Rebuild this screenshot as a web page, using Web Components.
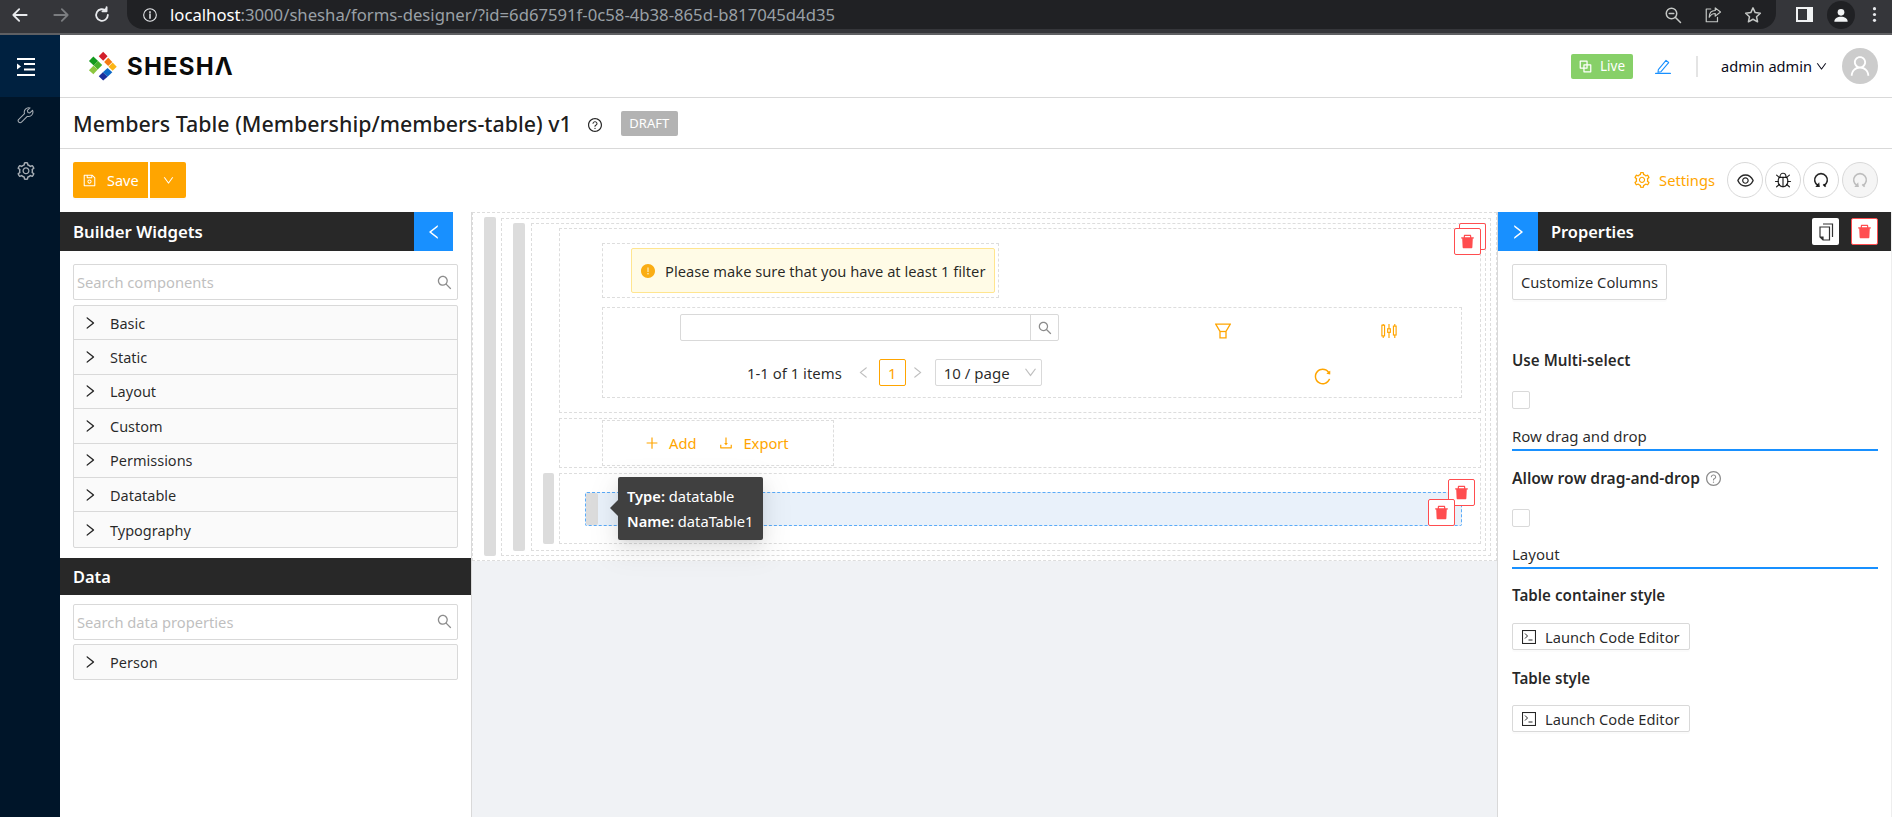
<!doctype html>
<html>
<head>
<meta charset="utf-8">
<title>Members Table</title>
<style>
  html, body { margin: 0; height: 100%; overflow: hidden; background: #fff; }
  body { font: 14.7px "Noto Sans", "Open Sans", sans-serif; color: rgba(0, 0, 0, 0.85); }
</style>
</head>
<body>
<shesha-app></shesha-app>

<script>
const ant = (d) => `<svg viewBox="64 64 896 896" fill="currentColor"><path d="${d}"/></svg>`;
const line = (body, box = 24, width = 1.6) =>
  `<svg viewBox="0 0 ${box} ${box}" fill="none" stroke="currentColor" stroke-width="${width}" stroke-linecap="round" stroke-linejoin="round">${body}</svg>`;

const icons = {
  search: ant("M909.6 854.5L649.9 594.8C690.2 542.7 712 479 712 412c0-80.2-31.3-155.4-87.9-212.1-56.6-56.7-132-87.9-212.1-87.9s-155.5 31.3-212.1 87.9C143.2 256.5 112 331.8 112 412c0 80.1 31.3 155.5 87.9 212.1C256.5 680.8 331.8 712 412 712c67 0 130.6-21.8 182.7-62l259.7 259.6a8.2 8.2 0 0011.6 0l43.6-43.5a8.2 8.2 0 000-11.6zM570.4 570.4C528 612.7 471.8 636 412 636s-116-23.3-158.4-65.6C211.3 528 188 471.8 188 412s23.3-116.1 65.6-158.4C296 211.3 352.2 188 412 188s116.1 23.2 158.4 65.6S636 352.2 636 412s-23.3 116.1-65.6 158.4z"),
  trash: ant("M864 256H736v-80c0-35.3-28.7-64-64-64H352c-35.3 0-64 28.7-64 64v80H160c-17.7 0-32 14.3-32 32v32c0 4.4 3.6 8 8 8h60.4l24.7 523c1.6 34.1 29.8 61 63.9 61h454c34.2 0 62.3-26.8 63.9-61l24.7-523H888c4.4 0 8-3.6 8-8v-32c0-17.7-14.3-32-32-32zm-200 0H360v-72h304v72z"),
  right: ant("M765.7 486.8L314.9 134.7A7.97 7.97 0 00302 141v77.3c0 4.9 2.3 9.6 6.1 12.6l360 281.1-360 281.1c-3.9 3-6.1 7.7-6.1 12.6V883c0 6.7 7.7 10.4 12.9 6.3l450.8-352.1a31.96 31.96 0 000-50.4z"),
  left: ant("M724 218.3V141c0-6.7-7.7-10.4-12.9-6.3L260.3 486.8a31.86 31.86 0 000 50.3l450.8 352.1c5.3 4.1 12.9.4 12.9-6.3v-77.3c0-4.9-2.3-9.6-6.1-12.6l-360-281 360-281.1c3.8-3 6.1-7.7 6.1-12.6z"),
  down: ant("M884 256h-75c-5.1 0-9.9 2.5-12.9 6.6L512 654.2 227.9 262.6c-3-4.1-7.8-6.6-12.9-6.6h-75c-6.5 0-10.3 7.4-6.5 12.7l352.6 486.1c12.8 17.6 39 17.6 51.7 0l352.6-486.1c3.9-5.3.1-12.7-6.4-12.7z"),
  plus: `<svg viewBox="64 64 896 896" fill="currentColor"><path d="M482 152h60q8 0 8 8v704q0 8-8 8h-60q-8 0-8-8V160q0-8 8-8z"/><path d="M176 474h672q8 0 8 8v60q0 8-8 8H176q-8 0-8-8v-60q0-8 8-8z"/></svg>`,
  save: ant("M893.3 293.3L730.7 130.7c-7.5-7.5-16.7-13-26.7-16V112H144c-17.7 0-32 14.3-32 32v736c0 17.7 14.3 32 32 32h736c17.7 0 32-14.3 32-32V338.5c0-17-6.7-33.2-18.7-45.2zM384 184h256v104H384V184zm456 656H184V184h136v136c0 17.7 14.3 32 32 32h320c17.7 0 32-14.3 32-32V205.8l136 136V840zM512 442c-79.5 0-144 64.5-144 144s64.5 144 144 144 144-64.5 144-144-64.5-144-144-144zm0 224c-44.2 0-80-35.8-80-80s35.8-80 80-80 80 35.8 80 80-35.8 80-80 80z"),
  gear: ant("M924.8 625.7l-65.5-56c3.1-19 4.7-38.4 4.7-57.8s-1.6-38.8-4.7-57.8l65.5-56a32.03 32.03 0 009.3-35.2l-.9-2.6a443.74 443.74 0 00-79.7-137.9l-1.8-2.1a32.12 32.12 0 00-35.1-9.5l-81.3 28.9c-30-24.6-63.5-44-99.7-57.6l-15.7-85a32.05 32.05 0 00-25.8-25.7l-2.7-.5c-52.1-9.4-106.9-9.4-159 0l-2.7.5a32.05 32.05 0 00-25.8 25.7l-15.8 85.4a351.86 351.86 0 00-99 57.4l-81.9-29.1a32 32 0 00-35.1 9.5l-1.8 2.1a446.02 446.02 0 00-79.7 137.9l-.9 2.6c-4.5 12.5-.8 26.5 9.3 35.2l66.3 56.6c-3.1 18.8-4.6 38-4.6 57.1 0 19.2 1.5 38.4 4.6 57.1L99 625.5a32.03 32.03 0 00-9.3 35.2l.9 2.6c18.1 50.4 44.9 96.9 79.7 137.9l1.8 2.1a32.12 32.12 0 0035.1 9.5l81.9-29.1c29.8 24.5 63.1 43.9 99 57.4l15.8 85.4a32.05 32.05 0 0025.8 25.7l2.7.5a449.4 449.4 0 00159 0l2.7-.5a32.05 32.05 0 0025.8-25.7l15.7-85a350 350 0 0099.7-57.6l81.3 28.9a32 32 0 0035.1-9.5l1.8-2.1c34.8-41.1 61.6-87.5 79.7-137.9l.9-2.6c4.5-12.3.8-26.3-9.3-35zM788.3 465.9c2.5 15.1 3.8 30.6 3.8 46.1s-1.3 31-3.8 46.1l-6.6 40.1 74.7 63.9a370.03 370.03 0 01-42.6 73.6L721 702.8l-31.4 25.8c-23.9 19.6-50.5 35-79.3 45.8l-38.1 14.3-17.9 97a377.5 377.5 0 01-85 0l-17.9-97.2-37.8-14.5c-28.5-10.8-55-26.2-78.7-45.7l-31.4-25.9-93.4 33.2c-17-22.9-31.2-47.6-42.6-73.6l75.5-64.5-6.5-40c-2.4-14.9-3.7-30.3-3.7-45.5 0-15.3 1.2-30.6 3.7-45.5l6.5-40-75.5-64.5c11.3-26.1 25.6-50.7 42.6-73.6l93.4 33.2 31.4-25.9c23.7-19.5 50.2-34.9 78.7-45.7l37.9-14.3 17.9-97.2c28.1-3.2 56.8-3.2 85 0l17.9 97 38.1 14.3c28.7 10.8 55.4 26.2 79.3 45.8l31.4 25.8 92.8-32.9c17 22.9 31.2 47.6 42.6 73.6L781.8 426l6.5 39.9zM512 326c-97.2 0-176 78.8-176 176s78.8 176 176 176 176-78.8 176-176-78.8-176-176-176zm79.2 255.2A111.6 111.6 0 01512 614c-29.9 0-58-11.7-79.2-32.8A111.6 111.6 0 01400 502c0-29.9 11.7-58 32.8-79.2C454 401.6 482.1 390 512 390c29.9 0 58 11.6 79.2 32.8A111.6 111.6 0 01624 502c0 29.9-11.7 58-32.8 79.2z"),
  eye: ant("M942.2 486.2C847.4 286.5 704.1 186 512 186c-192.2 0-335.4 100.5-430.2 300.3a60.3 60.3 0 000 51.5C176.6 737.5 319.9 838 512 838c192.2 0 335.4-100.5 430.2-300.3 7.7-16.2 7.7-35 0-51.5zM512 766c-161.3 0-279.4-81.8-362.7-254C232.6 339.8 350.7 258 512 258c161.3 0 279.4 81.8 362.7 254C791.5 684.2 673.4 766 512 766zm-4-430c-97.2 0-176 78.8-176 176s78.8 176 176 176 176-78.8 176-176-78.8-176-176-176zm0 288c-61.9 0-112-50.1-112-112s50.1-112 112-112 112 50.1 112 112-50.1 112-112 112z"),
  reload: ant("M909.1 209.3l-56.4 44.1C775.8 155.1 656.2 92 521.9 92 290 92 102.3 279.5 102 511.5 101.7 743.7 289.8 932 521.9 932c181.3 0 335.8-115 394.6-276.1 1.5-4.2-.7-8.9-4.9-10.3l-56.7-19.5a8 8 0 00-10.1 4.8c-1.8 5-3.8 10-5.9 14.9-17.3 41-42.1 77.8-73.7 109.4A344.77 344.77 0 01655.9 829c-42.3 17.9-87.4 27-133.8 27-46.5 0-91.5-9.1-133.8-27A341.5 341.5 0 01279 755.2a342.16 342.16 0 01-73.7-109.4c-17.9-42.4-27-87.4-27-133.9s9.1-91.5 27-133.9c17.3-41 42.1-77.8 73.7-109.4 31.6-31.6 68.4-56.4 109.3-73.8 42.3-17.9 87.4-27 133.8-27 46.5 0 91.5 9.1 133.8 27a341.5 341.5 0 01109.3 73.8c9.9 9.9 19.2 20.4 27.8 31.4l-60.2 47a8 8 0 003 14.1l175.6 43c5 1.2 9.9-2.6 9.9-7.7l.8-180.9c-.1-6.6-7.8-10.3-13-6.2z"),
  download: ant("M505.7 661a8 8 0 0012.6 0l112-141.7c4.1-5.2.4-12.9-6.3-12.9h-74.1V168c0-4.4-3.6-8-8-8h-60c-4.4 0-8 3.6-8 8v338.3H400c-6.7 0-10.4 7.7-6.3 12.9l112 141.8zM878 626h-60c-4.4 0-8 3.6-8 8v154H214V634c0-4.4-3.6-8-8-8h-60c-4.4 0-8 3.6-8 8v198c0 17.7 14.3 32 32 32h684c17.7 0 32-14.3 32-32V634c0-4.4-3.6-8-8-8z"),
  help: `<svg viewBox="64 64 896 896" fill="currentColor"><path d="M512 64C264.6 64 64 264.6 64 512s200.6 448 448 448 448-200.6 448-448S759.4 64 512 64zm0 820c-205.4 0-372-166.6-372-372s166.6-372 372-372 372 166.6 372 372-166.6 372-372 372z"/><path d="M623.6 316.7C593.6 290.4 554 276 512 276s-81.6 14.5-111.6 40.7C369.2 344 352 380.7 352 420v7.6c0 4.4 3.6 8 8 8h48c4.4 0 8-3.6 8-8V420c0-44.1 43.1-80 96-80s96 35.9 96 80c0 31.1-22 59.6-56.1 72.7-21.2 8.1-39.2 22.3-52.1 40.9-13.1 19-19.9 41.8-19.9 64.9V620c0 4.4 3.6 8 8 8h48c4.4 0 8-3.6 8-8v-22.7a48.3 48.3 0 0130.9-44.8c59-22.7 97.1-74.7 97.1-132.5.1-39.3-17.1-76-48.3-103.3zM472 732a40 40 0 1080 0 40 40 0 10-80 0z"/></svg>`,
  warn: ant("M512 64C264.6 64 64 264.6 64 512s200.6 448 448 448 448-200.6 448-448S759.4 64 512 64zm-32 232c0-4.4 3.6-8 8-8h48c4.4 0 8 3.6 8 8v272c0 4.4-3.6 8-8 8h-48c-4.4 0-8-3.6-8-8V296zm32 440a48.01 48.01 0 010-96 48.01 48.01 0 010 96z"),
  user: ant("M858.5 763.6a374 374 0 00-80.6-119.5 375.63 375.63 0 00-119.5-80.6c-.4-.2-.8-.3-1.2-.5C719.5 518 760 444.7 760 362c0-137-111-248-248-248S264 225 264 362c0 82.7 40.5 156 102.8 201.1-.4.2-.8.3-1.2.5-44.8 18.9-85 46-119.5 80.6a375.63 375.63 0 00-80.6 119.5A371.7 371.7 0 00136 901.8a8 8 0 008 8.2h60c4.4 0 8-3.6 8-7.8 2-77.2 33-149.5 87.8-204.3 56.7-56.7 132-87.9 212.2-87.9s155.5 31.2 212.2 87.9C779 752.7 810 825 812 902.2c.1 4.4 3.6 7.8 8 7.8h60a8 8 0 008-8.2c-1-47.8-10.9-94.3-29.5-138.2zM512 534c-45.9 0-89.1-17.9-121.6-50.4S340 407.9 340 362c0-45.9 17.9-89.1 50.4-121.6S466.1 190 512 190s89.1 17.9 121.6 50.4S684 316.1 684 362c0 45.9-17.9 89.1-50.4 121.6S557.9 534 512 534z"),
  edit: line(`<path d="M5 17.5 16.500 3.500l4 3.300L9 20.500l-4.500 1z"/><path d="M1 23.200h22" stroke-width="2"/>`),
  menu: `<svg viewBox="0 0 18 18" fill="currentColor"><rect x="0" y="0" width="18" height="2"/><rect x="7" y="5" width="11" height="2"/><rect x="7" y="10.500" width="11" height="2"/><rect x="0" y="16" width="18" height="2"/><path d="M0 5.500v6l4-3z"/></svg>`,
  wrench: line(`<path d="M21 4.500l-3.600 3.600-2.600-.8-.8-2.600L17.600 1.200a6 6 0 0 0-7.400 7.800L2.400 16.800a2.600 2.600 0 0 0 3.700 3.700l7.800-7.800A6 6 0 0 0 21 4.500z"/>`, 23, 1.400),
  live: line(`<rect x="2" y="2" width="11" height="11"/><rect x="8" y="8" width="11" height="11"/>`, 21, 2),
  bug: line(`<path d="M8 8c0-3 1.800-5 4-5s4 2 4 5"/><path d="M7 8.500h10c1 1.500 1.500 3.500 1.500 5.500 0 4-3 7-6.500 7s-6.500-3-6.500-7c0-2 .5-4 1.500-5.500z"/><path d="M12 8.500v12.500M2 14h3.500M18.500 14H22M3.500 5.500l3.500 3M20.500 5.500 17 8.500M3.500 21l3.500-3M20.500 21 17 18"/>`),
  undo: `<svg viewBox="0 0 24 24" fill="none" stroke="currentColor" stroke-width="2.400"><path d="M7.500 20.300a9.500 9.500 0 1 1 9 0"/><path d="M3.500 22.500h6.800l-1-7z" fill="currentColor" stroke="none"/><path d="M15.500 18.500l3.500 3.500" stroke-width="2.600"/></svg>`,
  funnel: `<svg viewBox="0 0 16 16" fill="none" stroke="currentColor" stroke-width="1.300"><path d="M.7 1.200h14.600L11 8.500v6.300H5V8.500z"/><path d="M5 8.500h6"/></svg>`,
  columns: `<svg viewBox="0 0 18 18" fill="none" stroke="currentColor" stroke-width="1.300"><rect x="1" y="2.500" width="3" height="12"/><path d="M2.500 1v1.500M2.500 14.500V17"/><rect x="7.500" y="6.500" width="3" height="4"/><path d="M9 1v5.500M9 10.500V17"/><rect x="14" y="3.500" width="3" height="10"/><path d="M15.500 1v2.500M15.500 13.500V17"/></svg>`,
  code: `<svg viewBox="0 0 14 14" fill="none" stroke="currentColor"><rect x="0.500" y="0.500" width="13" height="13" stroke-width="1.100"/><path d="M3 3.500l2.500 2.500L3 8.500M6.500 10h4" stroke-width="1"/></svg>`,
  copy: `<svg viewBox="0 0 18 18" fill="none" stroke="currentColor" stroke-width="1.200"><path d="M6 1h9.500v13"/><path d="M3 4h9.500v13H6l-3-3z" fill="#fff"/><path d="M3 14h3v3" fill="currentColor"/></svg>`,
  back: line(`<path d="M20 12H4M11 5l-7 7 7 7"/>`, 24, 2.200),
  chromeReload: line(`<path d="M19 12a7 7 0 1 1-2.200-5.100"/><path d="M17.500 2.500v5h-5" fill="currentColor"/>`, 24, 2.200),
  info: line(`<circle cx="12" cy="12" r="9.500"/><path d="M12 11v6M12 7v1.500" stroke-width="2.200"/>`),
  zoomOut: line(`<circle cx="10" cy="10" r="7"/><path d="M15 15l7 7M7 10h6"/>`, 24, 2),
  share: line(`<path d="M9 4H3v17h15v-6"/><path d="M22 8l-7-5.500v3.500C10 6 7 9.500 7 15c2-3.500 4.500-5 8-5v3.500z"/>`, 24, 1.600),
  star: line(`<path d="M12 2.500l2.900 6.300 6.900.8-5.100 4.700 1.400 6.800L12 17.700 5.900 21.100l1.400-6.800L2.200 9.600l6.900-.8z"/>`, 24, 2),
  account: `<svg viewBox="0 0 24 24" fill="currentColor"><circle cx="12" cy="8" r="5"/><path d="M2 22c0-5 4.500-7.500 10-7.500S22 17 22 22z"/></svg>`,
  dots: `<svg viewBox="0 0 4 18" fill="currentColor"><circle cx="2" cy="2" r="1.900"/><circle cx="2" cy="9" r="1.900"/><circle cx="2" cy="16" r="1.900"/></svg>`
};

class UiIcon extends HTMLElement {
  connectedCallback() {
    const root = this.attachShadow({ mode: "open" });
    const size = this.getAttribute("size") ?? "14";
    root.innerHTML = `<style>
      :host { display: inline-flex; flex: none; width: ${size}px; height: ${size}px; line-height: 0; }
      svg { width: 100%; height: 100%; display: block; }
    </style>${icons[this.getAttribute("name")] ?? ""}`;
  }
}

class ChromeBar extends HTMLElement {
  connectedCallback() {
    const root = this.attachShadow({ mode: "open" });
    root.innerHTML = `<style>
      :host { display: flex; align-items: flex-start; height: 35px; box-sizing: border-box; background: #35363a; border-bottom: 2px solid #5f6063; color: #e8eaed; }
      .nav { display: flex; width: 127px; height: 29px; align-items: center; padding-left: 10px; box-sizing: border-box; gap: 21px; }
      .nav ui-icon:nth-child(2) { color: #7b7d80; }
      .omni { flex: none; width: 1649px; height: 29px; background: #202124; border-radius: 0 0 16px 16px; display: flex; align-items: center; padding: 0 0 0 15px; box-sizing: border-box; }
      .url { margin-left: 12px; flex: 1; font: 16.7px "Noto Sans", sans-serif; color: #9aa0a6; white-space: nowrap; }
      .url b { font-weight: 400; color: #fff; }
      .omni .end { display: flex; gap: 22px; margin-right: 14px; color: #c4c7c5; }
      .tail { display: flex; align-items: center; height: 29px; flex: 1; position: relative; }
      .panel { margin-left: 20px; width: 17px; height: 15px; border: 2px solid #f1f3f4; background: linear-gradient(90deg, #35363a 0 9px, #f1f3f4 9px); box-sizing: border-box; }
      .acct { margin-left: 14px; width: 28px; height: 28px; border-radius: 50%; background: #202124; display: flex; align-items: center; justify-content: center; color: #f1f3f4; }
      .dots { margin-left: 12px; color: #e8eaed; }
    </style>
    <div class="nav">
      <ui-icon name="back" size="20"></ui-icon>
      <ui-icon name="back" size="20" style="transform: scaleX(-1)"></ui-icon>
      <ui-icon name="chromeReload" size="20"></ui-icon>
    </div>
    <div class="omni">
      <ui-icon name="info" size="16"></ui-icon>
      <div class="url"><b>localhost</b>:3000/shesha/forms-designer/?id=6d67591f-0c58-4b38-865d-b817045d4d35</div>
      <div class="end">
        <ui-icon name="zoomOut" size="18"></ui-icon>
        <ui-icon name="share" size="18"></ui-icon>
        <ui-icon name="star" size="18"></ui-icon>
      </div>
    </div>
    <div class="tail">
      <div class="panel"></div>
      <div class="acct"><ui-icon name="account" size="16"></ui-icon></div>
      <ui-icon class="dots" name="dots" size="15"></ui-icon>
    </div>`;
  }
}

class AppSider extends HTMLElement {
  connectedCallback() {
    const root = this.attachShadow({ mode: "open" });
    root.innerHTML = `<style>
      :host { display: flex; flex-direction: column; width: 60px; flex: none; background: #001529; color: rgba(255, 255, 255, 0.65); }
      .top { height: 62px; background: #002140; display: flex; justify-content: center; align-items: center; color: #fff; padding: 2px 9px 0 0; box-sizing: border-box; }
      .item { display: flex; justify-content: center; align-items: center; box-sizing: border-box; padding-right: 9px; }
      .item.first { height: 35px; padding-top: 1px; }
      .item.next { height: 60px; padding-top: 18px; }
    </style>
    <div class="top"><ui-icon name="menu" size="18"></ui-icon></div>
    <div class="item first"><ui-icon name="wrench" size="17"></ui-icon></div>
    <div class="item next"><ui-icon name="gear" size="18"></ui-icon></div>`;
  }
}

class AppHeader extends HTMLElement {
  connectedCallback() {
    const root = this.attachShadow({ mode: "open" });
    root.innerHTML = `<style>
      :host { display: flex; align-items: center; height: 63px; box-sizing: border-box; border-bottom: 1.500px solid #d9d9d9; padding: 0 14px 0 28px; background: #fff; }
      .logo { display: flex; align-items: center; gap: 9px; }
      .logo svg { width: 30px; height: 31px; display: block; }
      .word { font: 700 24px Inter, "Liberation Sans", sans-serif; letter-spacing: 1.2px; color: #0b0b0b; }
      .spacer { flex: 1; }
      .live { width: 62px; height: 25px; border-radius: 2px; background: #87d068; color: #fff; display: flex; align-items: center; justify-content: center; gap: 8px; font-size: 13.5px; }
      .edit { margin-left: 22px; color: #1890ff; }
      .sep { width: 2px; height: 21px; background: #e4e4e4; margin: 0 23px 0 25px; }
      .who { display: flex; align-items: center; gap: 4px; font-size: 14.6px; color: #0b0b1a; }
      .avatar { margin-left: 15px; width: 36px; height: 36px; border-radius: 50%; background: #ccc; color: #fff; display: flex; align-items: center; justify-content: center; }
    </style>
    <div class="logo">
      <svg viewBox="80 55 95 97">
        <polygon fill="#d3202b" points="128,57 142,71 128,85 114,71"/>
        <polygon fill="#f47a12" points="144,76 157,89 144,102 131,89"/>
        <polygon fill="#fbb415" points="158,91 171,104 158,117 145,104"/>
        <polygon fill="#0e69c7" points="142,108 157,122 142,136 127,122"/>
        <polygon fill="#1b2f9c" points="127,122 142,136 128,148 114,134"/>
        <polygon fill="#129a1d" points="83,86 97,72 112,86 98,100"/>
        <polygon fill="#45b02a" points="98,100 112,86 125,99 111,113"/>
        <polygon fill="#8cc63f" points="111,113 97,128 83,115 97,101"/>
      </svg>
      <span class="word">SHESHΛ</span>
    </div>
    <div class="spacer"></div>
    <div class="live"><ui-icon name="live" size="13"></ui-icon><span>Live</span></div>
    <ui-icon class="edit" name="edit" size="16"></ui-icon>
    <div class="sep"></div>
    <div class="who"><span>admin admin</span><ui-icon name="down" size="11"></ui-icon></div>
    <div class="avatar"><ui-icon name="user" size="22"></ui-icon></div>`;
  }
}

class TitleBar extends HTMLElement {
  connectedCallback() {
    const root = this.attachShadow({ mode: "open" });
    root.innerHTML = `<style>
      :host { display: flex; align-items: center; height: 51px; box-sizing: border-box; border-bottom: 1.500px solid #d9d9d9; padding: 0 0 0 13px; }
      h1 { margin: 0; font-size: 21.4px; font-weight: 500; color: rgba(0, 0, 0, 0.9); white-space: nowrap; }
      ui-icon { margin: 4px 19px 0 16px; }
      .tag { width: 57px; height: 25px; border-radius: 2px; background: #b3b3b3; color: #fff; font-size: 13px; display: flex; align-items: center; justify-content: center; }
    </style>
    <h1>Members Table (Membership/members-table) v1</h1>
    <ui-icon name="help" size="14"></ui-icon>
    <div class="tag">DRAFT</div>`;
  }
}

class DesignerToolbar extends HTMLElement {
  connectedCallback() {
    const root = this.attachShadow({ mode: "open" });
    root.innerHTML = `<style>
      :host { display: flex; align-items: flex-start; height: 63px; box-sizing: border-box; padding: 13px 14px 0 13px; }
      .save, .drop { height: 36px; background: #ffa500; color: #fff; display: flex; align-items: center; box-shadow: 0 2px 0 rgba(0, 0, 0, 0.02); }
      .save { width: 75px; box-sizing: border-box; padding-left: 10px; gap: 11px; font-size: 14.5px; border-radius: 2px 0 0 2px; }
      .drop { width: 36px; justify-content: center; margin-left: 2px; border-radius: 0 2px 2px 0; }
      .spacer { flex: 1; }
      .settings { display: flex; align-items: center; gap: 9px; height: 36px; color: #ffa500; margin-right: 10px; }
      .round { width: 36px; height: 36px; box-sizing: border-box; border: 1px solid #d9d9d9; border-radius: 50%; display: flex; align-items: center; justify-content: center; margin-left: 2px; background: #fff; }
      .round.off { background: #f5f5f5; color: #bdbdbd; margin-left: 3px; }
    </style>
    <div class="save"><ui-icon name="save" size="13"></ui-icon><span>Save</span></div>
    <div class="drop"><ui-icon name="down" size="11"></ui-icon></div>
    <div class="spacer"></div>
    <div class="settings"><ui-icon name="gear" size="16"></ui-icon><span>Settings</span></div>
    <div class="round"><ui-icon name="eye" size="17"></ui-icon></div>
    <div class="round"><ui-icon name="bug" size="18"></ui-icon></div>
    <div class="round"><ui-icon name="undo" size="16"></ui-icon></div>
    <div class="round off"><ui-icon name="undo" size="16"></ui-icon></div>`;
  }
}

class SearchBox extends HTMLElement {
  connectedCallback() {
    const root = this.attachShadow({ mode: "open" });
    root.innerHTML = `<style>
      :host { display: flex; align-items: center; justify-content: space-between; height: 36px; box-sizing: border-box; border: 1px solid #d9d9d9; border-radius: 2px; padding: 0 5px 0 3px; background: #fff; color: #bfbfbf; }
      ui-icon { color: #8c8c8c; }
    </style>
    <span>${this.getAttribute("placeholder") ?? ""}</span>
    <ui-icon name="search" size="15"></ui-icon>`;
  }
}

class GroupList extends HTMLElement {
  connectedCallback() {
    const root = this.attachShadow({ mode: "open" });
    const names = (this.getAttribute("items") ?? "").split(",");
    const rows = names
      .map((name) => `<div class="row"><ui-icon name="right" size="14"></ui-icon><span>${name}</span></div>`)
      .join("");
    root.innerHTML = `<style>
      :host { display: block; border: 1px solid #d9d9d9; border-radius: 2px; background: #fafafa; font-size: 14.5px; }
      .row { display: flex; align-items: center; gap: 13px; height: 34.400px; box-sizing: border-box; padding-left: 9px; border-bottom: 1px solid #d9d9d9; color: rgba(0, 0, 0, 0.85); }
      .row:last-child { border-bottom: 0; }
    </style>${rows}`;
  }
}

class WidgetsPanel extends HTMLElement {
  connectedCallback() {
    const root = this.attachShadow({ mode: "open" });
    root.innerHTML = `<style>
      :host { display: flex; flex-direction: column; box-sizing: border-box; border-right: 1px solid #d9d9d9; background: #fff; }
      .head { display: flex; height: 39px; width: 393px; }
      .bar { flex: 1; background: #282828; color: #fff; font-size: 16.8px; font-weight: 600; display: flex; align-items: center; padding-left: 13px; }
      .toggle { width: 39px; background: #1890ff; color: #fff; display: flex; align-items: center; justify-content: center; }
      .data { height: 37px; margin-top: 10px; background: #282828; color: #fff; font-size: 16.4px; font-weight: 600; display: flex; align-items: center; padding-left: 13px; }
      .pad { display: flex; flex-direction: column; padding: 0 13px; }
      .a { padding-top: 13px; gap: 5px; }
      .b { padding-top: 9px; gap: 4px; }
    </style>
    <div class="head">
      <div class="bar">Builder Widgets</div>
      <div class="toggle"><ui-icon name="left" size="16"></ui-icon></div>
    </div>
    <div class="pad a">
      <search-box placeholder="Search components"></search-box>
      <group-list items="Basic,Static,Layout,Custom,Permissions,Datatable,Typography"></group-list>
    </div>
    <div class="data">Data</div>
    <div class="pad b">
      <search-box placeholder="Search data properties"></search-box>
      <group-list items="Person"></group-list>
    </div>`;
  }
}

class DropZone extends HTMLElement {
  connectedCallback() {
    const root = this.attachShadow({ mode: "open" });
    root.innerHTML = `<style>
      :host { display: block; box-sizing: border-box; border: 1px dashed #ddd; }
    </style><slot></slot>`;
  }
}

class DragBar extends HTMLElement {
  connectedCallback() {
    const root = this.attachShadow({ mode: "open" });
    root.innerHTML = `<style>
      :host { display: block; flex: none; width: 12px; background: #dcdcdc; border-radius: 2px; }
    </style>`;
  }
}

class TrashButton extends HTMLElement {
  connectedCallback() {
    const root = this.attachShadow({ mode: "open" });
    const blank = this.hasAttribute("blank");
    root.innerHTML = `<style>
      :host { position: absolute; width: 27px; height: 27px; box-sizing: border-box; border: 1px solid #ff4d4f; border-radius: 2px; background: #fff; color: #ff4d4f; display: flex; align-items: center; justify-content: center; }
    </style>${blank ? "" : `<ui-icon name="trash" size="15"></ui-icon>`}`;
  }
}

class FormCanvas extends HTMLElement {
  connectedCallback() {
    const root = this.attachShadow({ mode: "open" });
    root.innerHTML = `<style>
      :host { display: block; position: relative; background: #f0f2f5; overflow: hidden; }
      .page { height: 349px; box-sizing: border-box; background: #fff; }
      .row { display: flex; height: 100%; box-sizing: border-box; }
      .outer { padding: 4px 5px 4px 11px; gap: 5px; }
      .outer > drop-zone { flex: 1; min-width: 0; margin-top: 1px; }
      .mid { padding: 4px 4px 4px 11px; gap: 6px; }
      .mid > drop-zone { flex: 1; min-width: 0; }
      .rows { display: flex; flex-direction: column; gap: 5px; height: 100%; box-sizing: border-box; padding: 4px 4px 6px 11px; }
      .line { display: flex; gap: 5px; }
      .line > drop-zone { flex: 1; min-width: 0; }
      .line .gap { width: 11px; flex: none; }
      .line drag-bar { width: 11px; }
      .first { height: 185px; box-sizing: border-box; padding: 14px 18px 0 42px; display: flex; flex-direction: column; gap: 9px; }
      .alert-zone { width: 397px; height: 55px; padding: 4px 3px 0 0; display: flex; justify-content: flex-end; }
      .alert { width: 364px; height: 45px; box-sizing: border-box; background: #fffbe6; border: 1px solid #ffe58f; border-radius: 2px; display: flex; align-items: center; gap: 10px; padding-left: 9px; white-space: nowrap; }
      .alert ui-icon { color: #faad14; }
      .tools { height: 91px; padding: 6px 0 0 77px; position: relative; }
      .top { display: flex; align-items: center; height: 27px; color: #ffa500; }
      .search { width: 379px; height: 27px; box-sizing: border-box; border: 1px solid #d9d9d9; border-radius: 2px; display: flex; justify-content: flex-end; background: #fff; }
      .search div { width: 27px; border-left: 1px solid #d9d9d9; display: flex; align-items: center; justify-content: center; color: #8c8c8c; }
      .pager { display: flex; align-items: center; height: 27px; margin: 18px 0 0 67px; font-size: 14.9px; }
      .pager .muted { color: #bfbfbf; }
      .page-no { width: 27px; height: 27px; box-sizing: border-box; border: 1px solid #ffa500; border-radius: 2px; color: #ffa500; display: flex; align-items: center; justify-content: center; margin: 0 5.5px 0 9px; }
      .size { width: 107px; height: 27px; box-sizing: border-box; border: 1px solid #d9d9d9; border-radius: 2px; display: flex; align-items: center; justify-content: space-between; padding: 0 4px 0 8px; margin-left: 10.5px; font-size: 15px; }
      .size ui-icon { color: #bfbfbf; }
      .refresh { color: #ffa500; margin: 8px 0 0 272px; }
      .second { height: 50px; box-sizing: border-box; padding: 1px 0 0 42px; }
      .actions { width: 232px; height: 46px; padding-left: 42px; display: flex; align-items: center; color: #ffa500; }
      .actions span { margin: 0 23px 0 10px; }
      .third { height: 71px; box-sizing: border-box; padding: 18px 18px 0 25px; }
      .selected { height: 34px; box-sizing: border-box; border: 1px dashed #5aabf8; border-radius: 2px; background: #e9f1fa; display: flex; }
      .selected drag-bar { width: 12px; height: 100%; }
      .tip { position: absolute; left: 146px; top: 265px; width: 145px; height: 63px; box-sizing: border-box; border-radius: 2px; background: #404040; color: #fff; padding: 7px 9px; line-height: 25px; white-space: nowrap; box-shadow: 0 3px 6px -4px rgba(0,0,0,.12), 0 6px 16px rgba(0,0,0,.08), 0 9px 28px 8px rgba(0,0,0,.05); }
      .tip::before { content: ""; position: absolute; left: -8px; top: 23px; border: 8px solid transparent; border-left: 0; border-right-color: #404040; }
      .tip b { font-weight: 600; }
    </style>
    <drop-zone class="page">
      <div class="row outer">
        <drag-bar></drag-bar>
        <drop-zone>
          <div class="row mid">
            <drag-bar></drag-bar>
            <drop-zone>
              <div class="rows">
                <div class="line">
                  <div class="gap"></div>
                  <drop-zone class="first">
                    <drop-zone class="alert-zone">
                      <div class="alert"><ui-icon name="warn" size="14"></ui-icon><span>Please make sure that you have at least 1 filter</span></div>
                    </drop-zone>
                    <drop-zone class="tools">
                      <div class="top">
                        <div class="search"><div><ui-icon name="search" size="14"></ui-icon></div></div>
                        <ui-icon name="funnel" size="16" style="margin-left: 156px; margin-top: 6px"></ui-icon>
                        <ui-icon name="columns" size="16" style="margin-left: 150px; margin-top: 6px"></ui-icon>
                      </div>
                      <div class="pager">
                        <span>1-1 of 1 items</span>
                        <ui-icon class="muted" name="left" size="13" style="margin-left: 15px"></ui-icon>
                        <div class="page-no">1</div>
                        <ui-icon class="muted" name="right" size="13"></ui-icon>
                        <div class="size"><span>10 / page</span><ui-icon name="down" size="13"></ui-icon></div>
                        <ui-icon class="refresh" name="reload" size="17"></ui-icon>
                      </div>
                    </drop-zone>
                  </drop-zone>
                </div>
                <div class="line">
                  <div class="gap"></div>
                  <drop-zone class="second">
                    <drop-zone class="actions">
                      <ui-icon name="plus" size="14"></ui-icon><span>Add</span>
                      <ui-icon name="download" size="14" style="margin-left: 0"></ui-icon><span>Export</span>
                    </drop-zone>
                  </drop-zone>
                </div>
                <div class="line">
                  <drag-bar></drag-bar>
                  <drop-zone class="third">
                    <div class="selected"><drag-bar></drag-bar></div>
                  </drop-zone>
                </div>
              </div>
            </drop-zone>
          </div>
        </drop-zone>
      </div>
    </drop-zone>
    <trash-button blank style="left: 987px; top: 11px"></trash-button>
    <trash-button style="left: 982px; top: 16px"></trash-button>
    <trash-button style="left: 976px; top: 267px"></trash-button>
    <trash-button style="left: 956px; top: 287px"></trash-button>
    <div class="tip"><b>Type:</b> datatable<br><b>Name:</b> dataTable1</div>`;
  }
}

class PropsPanel extends HTMLElement {
  connectedCallback() {
    const root = this.attachShadow({ mode: "open" });
    const launch = `<div class="btn launch"><ui-icon name="code" size="14"></ui-icon><span>Launch Code Editor</span></div>`;
    root.innerHTML = `<style>
      :host { display: flex; flex-direction: column; box-sizing: border-box; border-left: 1px solid #d9d9d9; border-right: 1px solid #eee; background: #fff; }
      .head { display: flex; align-items: center; height: 39px; background: #282828; color: #fff; }
      .toggle { width: 40px; height: 100%; background: #1890ff; display: flex; align-items: center; justify-content: center; }
      .title { flex: 1; font-size: 16.4px; font-weight: 600; padding-left: 13px; }
      .act { width: 27px; height: 27px; box-sizing: border-box; background: #fff; border-radius: 2px; display: flex; align-items: center; justify-content: center; color: #333; margin-right: 12px; }
      .act.del { color: #ff4d4f; border: 1px solid #ff4d4f; margin-right: 13px; }
      .body { padding: 13px 13px 0 14px; display: flex; flex-direction: column; align-items: flex-start; }
      .btn { height: 27px; box-sizing: border-box; border: 1px solid #d9d9d9; border-radius: 2px; display: flex; align-items: center; background: #fff; box-shadow: 0 2px 0 rgba(0, 0, 0, 0.016); white-space: nowrap; }
      .custom { height: 36px; width: 155px; justify-content: center; }
      .launch { width: 178px; padding-left: 9px; gap: 9px; }
      .label { font-size: 15.2px; font-weight: 600; line-height: 22px; display: flex; align-items: center; gap: 6px; }
      .label ui-icon { color: #8c8c8c; }
      .wide { font-size: 15.6px; }
      .box { width: 18px; height: 18px; box-sizing: border-box; border: 1px solid #d9d9d9; border-radius: 2px; }
      .section { align-self: stretch; font-size: 15px; line-height: 22px; padding-bottom: 2px; border-bottom: 2px solid #1890ff; }
    </style>
    <div class="head">
      <div class="toggle"><ui-icon name="right" size="16"></ui-icon></div>
      <div class="title">Properties</div>
      <div class="act"><ui-icon name="copy" size="18"></ui-icon></div>
      <div class="act del"><ui-icon name="trash" size="15"></ui-icon></div>
    </div>
    <div class="body">
      <div class="btn custom">Customize Columns</div>
      <div class="label" style="margin-top: 49px">Use Multi-select</div>
      <div class="box" style="margin-top: 20px"></div>
      <div class="section" style="margin-top: 16px">Row drag and drop</div>
      <div class="label wide" style="margin-top: 16px">Allow row drag-and-drop <ui-icon name="help" size="15"></ui-icon></div>
      <div class="box" style="margin-top: 20px"></div>
      <div class="section" style="margin-top: 16px">Layout</div>
      <div class="label" style="margin-top: 15px">Table container style</div>
      <div style="margin-top: 17px">${launch}</div>
      <div class="label" style="margin-top: 17px">Table style</div>
      <div style="margin-top: 16px">${launch}</div>
    </div>`;
  }
}

class SheshaApp extends HTMLElement {
  connectedCallback() {
    const root = this.attachShadow({ mode: "open" });
    root.innerHTML = `<style>
      :host { display: flex; flex-direction: column; height: 817px; overflow: hidden; }
      .shell { flex: 1; display: flex; min-height: 0; }
      .main { flex: 1; display: flex; flex-direction: column; min-width: 0; }
      .designer { flex: 1; display: grid; grid-template-columns: 412px 1025px 395px; min-height: 0; }
    </style>
    <chrome-bar></chrome-bar>
    <div class="shell">
      <app-sider></app-sider>
      <div class="main">
        <app-header></app-header>
        <title-bar></title-bar>
        <designer-toolbar></designer-toolbar>
        <div class="designer">
          <widgets-panel></widgets-panel>
          <form-canvas></form-canvas>
          <props-panel></props-panel>
        </div>
      </div>
    </div>`;
  }
}

const registrations = [
  ["ui-icon", UiIcon],
  ["chrome-bar", ChromeBar],
  ["app-sider", AppSider],
  ["app-header", AppHeader],
  ["title-bar", TitleBar],
  ["designer-toolbar", DesignerToolbar],
  ["search-box", SearchBox],
  ["group-list", GroupList],
  ["widgets-panel", WidgetsPanel],
  ["drop-zone", DropZone],
  ["drag-bar", DragBar],
  ["trash-button", TrashButton],
  ["form-canvas", FormCanvas],
  ["props-panel", PropsPanel],
  ["shesha-app", SheshaApp]
];

for (const [name, element] of registrations) {
  if (!customElements.get(name)) {
    customElements.define(name, element);
  }
}
</script>
</body>
</html>
